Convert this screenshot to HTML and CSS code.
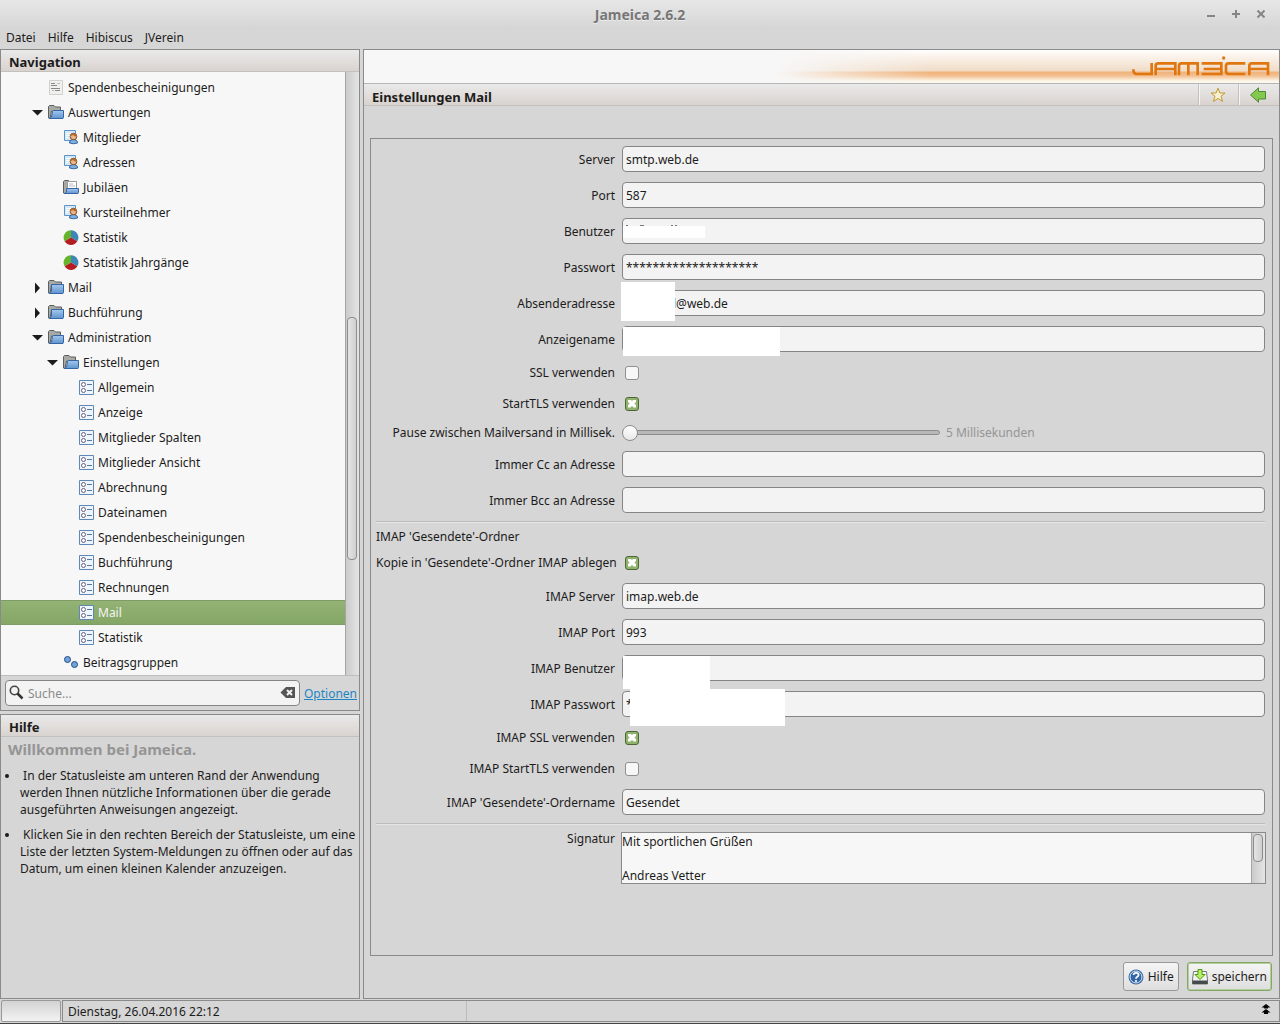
FILE: index.html
```html
<!DOCTYPE html>
<html lang="de">
  <head>
    <meta charset="UTF-8" />
    <meta name="viewport" content="width=device-width, initial-scale=1.0" />
    <title>Jameica 2.6.2</title>
    <link rel="stylesheet" href="styles.css">
  </head>
  <body>
    <svg class="icon-defs" aria-hidden="true">
      <defs>
        <linearGradient id="blue" x1="0" y1="0" x2="0" y2="1">
          <stop offset="0" stop-color="#a5c8ec" />
          <stop offset="1" stop-color="#5f93cf" />
        </linearGradient>
      </defs>
      <symbol id="folder" viewBox="0 0 16 16">
        <path d="M.5 13V1.500L1.500 .5H6L7.500 2H13.500V5H3.500L2 13.500H1z" fill="#a9a9a5" stroke="#5c5f60" />
        <path d="M3.500 4.500H15.500V12.500L15 13.500H1.500L3.500 11z" fill="url(#blue)" stroke="#3465a4" />
      </symbol>
      <symbol id="folder-open" viewBox="0 0 16 16">
        <path d="M.5 13V1.500L1.500 .5H6L7.500 2H12.500V6H3.500L2 13.500H1z" fill="#a9a9a5" stroke="#5c5f60" />
        <path d="M4.500 6.500L5.500 5.500H15.500V12.500L15 13.500H1.500L3.500 12z" fill="url(#blue)" stroke="#3465a4" />
      </symbol>
      <symbol id="folder-doc" viewBox="0 0 16 16">
        <path d="M.5 13V1.500L1.500 .5H5.500L7 2V13.500H1z" fill="#a9a9a5" stroke="#5c5f60" />
        <path d="M4.500 1.500H13.500V10H4.500z" fill="#fff" stroke="#999" />
        <path d="M6 4H10M6 6H12" stroke="#bbb" />
        <path d="M3.500 8.500H15.500V12.500L15 13.500H1.500L3.500 12z" fill="url(#blue)" stroke="#3465a4" />
      </symbol>
      <symbol id="doc" viewBox="0 0 16 16">
        <path d="M1.500 .5H14.500V14.500H1.500z" fill="#f0f0ee" stroke="#d0d0ce" />
        <path d="M3 3.500H7M3 5.500H9M3 8.500H12M7 10.500H12" stroke="#888" />
        <path d="M9 3.500H12M4 10.500H6" stroke="#bbb" />
      </symbol>
      <symbol id="person" viewBox="0 0 16 16">
        <path d="M1.500 .5H12.500V10.500H1.500z" fill="#d5e8f8" stroke="#5c93c9" />
        <path d="M3 3.500H8M3 5.500H6M3 7.500H5" stroke="#fff" />
        <path d="M6.500 13V12Q7 9.500 10.500 9.500T14.500 12V13Q10.500 14.500 6.500 13z" fill="#7fb0e2" stroke="#3465a4" />
        <circle cx="10.500" cy="6.500" r="3.300" fill="#e8b68a" stroke="#8a4e22" />
        <path d="M7 6Q8 2.500 11 3.500T14 6.500Q11 6.500 10 5Q9 6 7 6z" fill="#b36b2e" />
      </symbol>
      <symbol id="pie" viewBox="0 0 16 16">
        <path d="M8 7.500L1.700 11.300A7.300 7.300 0 0 1 8 .2z" fill="#65b52b" />
        <path d="M8 7.500V.2A7.300 7.300 0 0 1 14.300 11.300z" fill="#3d86b8" />
        <path d="M8 7.500L14.300 11.300A7.300 7.300 0 0 1 1.700 11.300z" fill="#b51c22" />
      </symbol>
      <symbol id="settings" viewBox="0 0 16 16">
        <path d="M1.500 .5H15.500V14.500H1.500z" fill="#eef5fc" stroke="#5f88b5" />
        <path d="M9 4.500H14M9 10.500H14" stroke="#5577a0" />
        <circle cx="5.500" cy="4.500" r="2" fill="#fff" stroke="#665f80" />
        <circle cx="5.500" cy="10.500" r="2" fill="#fff" stroke="#665f80" />
      </symbol>
      <symbol id="group" viewBox="0 0 16 16">
        <circle cx="4.500" cy="4.500" r="3" fill="#6fa3dc" stroke="#204a87" />
        <circle cx="11.500" cy="9.500" r="3" fill="#6fa3dc" stroke="#204a87" />
      </symbol>
      <symbol id="arrow-down" viewBox="0 0 12 12">
        <path d="M1 3H12L6.500 8.500z" fill="#1c1c1c" />
      </symbol>
      <symbol id="arrow-right" viewBox="0 0 12 12">
        <path d="M4 .5V11.500L9 6z" fill="#1c1c1c" />
      </symbol>
    </svg>

    <header class="titlebar">
      <h1>Jameica 2.6.2</h1>
      <div class="window-buttons">
        <button type="button" aria-label="Minimieren"><svg viewBox="0 0 9 9"><path d="M1 6H9" /></svg></button>
        <button type="button" aria-label="Maximieren"><svg viewBox="0 0 9 9"><path d="M5 0V8M1 4H9" /></svg></button>
        <button type="button" aria-label="Schließen"><svg viewBox="0 0 9 9"><path d="M1.500 .5L8.500 7.500M8.500 .5L1.500 7.500" /></svg></button>
      </div>
    </header>

    <nav class="menubar">
      <a href="#">Datei</a>
      <a href="#">Hilfe</a>
      <a href="#">Hibiscus</a>
      <a href="#">JVerein</a>
    </nav>

    <main class="workspace">
      <aside class="sidebar">
        <section class="pane">
          <h2 class="pane-title">Navigation</h2>
          <div class="tree-wrap">
            <ul class="tree">
              <li class="level-1"><span class="toggle"></span><svg class="icon"><use href="#doc" /></svg>Spendenbescheinigungen</li>
              <li class="level-1"><svg class="toggle"><use href="#arrow-down" /></svg><svg class="icon"><use href="#folder-open" /></svg>Auswertungen</li>
              <li class="level-2"><span class="toggle"></span><svg class="icon"><use href="#person" /></svg>Mitglieder</li>
              <li class="level-2"><span class="toggle"></span><svg class="icon"><use href="#person" /></svg>Adressen</li>
              <li class="level-2"><span class="toggle"></span><svg class="icon"><use href="#folder-doc" /></svg>Jubiläen</li>
              <li class="level-2"><span class="toggle"></span><svg class="icon"><use href="#person" /></svg>Kursteilnehmer</li>
              <li class="level-2"><span class="toggle"></span><svg class="icon"><use href="#pie" /></svg>Statistik</li>
              <li class="level-2"><span class="toggle"></span><svg class="icon"><use href="#pie" /></svg>Statistik Jahrgänge</li>
              <li class="level-1"><svg class="toggle"><use href="#arrow-right" /></svg><svg class="icon"><use href="#folder" /></svg>Mail</li>
              <li class="level-1"><svg class="toggle"><use href="#arrow-right" /></svg><svg class="icon"><use href="#folder" /></svg>Buchführung</li>
              <li class="level-1"><svg class="toggle"><use href="#arrow-down" /></svg><svg class="icon"><use href="#folder-open" /></svg>Administration</li>
              <li class="level-2"><svg class="toggle"><use href="#arrow-down" /></svg><svg class="icon"><use href="#folder-open" /></svg>Einstellungen</li>
              <li class="level-3"><span class="toggle"></span><svg class="icon"><use href="#settings" /></svg>Allgemein</li>
              <li class="level-3"><span class="toggle"></span><svg class="icon"><use href="#settings" /></svg>Anzeige</li>
              <li class="level-3"><span class="toggle"></span><svg class="icon"><use href="#settings" /></svg>Mitglieder Spalten</li>
              <li class="level-3"><span class="toggle"></span><svg class="icon"><use href="#settings" /></svg>Mitglieder Ansicht</li>
              <li class="level-3"><span class="toggle"></span><svg class="icon"><use href="#settings" /></svg>Abrechnung</li>
              <li class="level-3"><span class="toggle"></span><svg class="icon"><use href="#settings" /></svg>Dateinamen</li>
              <li class="level-3"><span class="toggle"></span><svg class="icon"><use href="#settings" /></svg>Spendenbescheinigungen</li>
              <li class="level-3"><span class="toggle"></span><svg class="icon"><use href="#settings" /></svg>Buchführung</li>
              <li class="level-3"><span class="toggle"></span><svg class="icon"><use href="#settings" /></svg>Rechnungen</li>
              <li class="level-3 selected"><span class="toggle"></span><svg class="icon"><use href="#settings" /></svg>Mail</li>
              <li class="level-3"><span class="toggle"></span><svg class="icon"><use href="#settings" /></svg>Statistik</li>
              <li class="level-2"><span class="toggle"></span><svg class="icon"><use href="#group" /></svg>Beitragsgruppen</li>
            </ul>
            <div class="scrollbar tree-scrollbar"><div class="thumb"></div></div>
          </div>
          <div class="search-bar">
            <div class="search-box">
              <svg class="icon" viewBox="0 0 16 16"><circle cx="5.500" cy="5.500" r="4.200" fill="none" stroke="#444" stroke-width="1.600" /><path d="M8.500 8.500L13.500 13.500" stroke="#333" stroke-width="2.500" /></svg>
              <input type="text" placeholder="Suche..." aria-label="Suche" />
              <svg class="icon" viewBox="0 0 16 16"><path d="M.5 7.500L6 2H15V13H6z" fill="#555" /><path d="M7 5L12 10M12 5L7 10" stroke="#f3f3f3" stroke-width="2" /></svg>
            </div>
            <a href="#">Optionen</a>
          </div>
        </section>

        <section class="pane help-pane">
          <h2 class="pane-title">Hilfe</h2>
          <h3>Willkommen bei Jameica.</h3>
          <ul class="help-list">
            <li>&nbsp;In der Statusleiste am unteren Rand der Anwendung werden Ihnen nützliche Informationen über die gerade ausgeführten Anweisungen angezeigt.</li>
            <li>&nbsp;Klicken Sie in den rechten Bereich der Statusleiste, um eine Liste der letzten System-Meldungen zu öffnen oder auf das Datum, um einen kleinen Kalender anzuzeigen.</li>
          </ul>
        </section>
      </aside>

      <section class="pane content">
        <div class="banner">
          <svg class="logo" viewBox="0 0 414 60" role="img" aria-label="Jameica">
            <path d="M4 40Q4 54 14 54H59V21M71 58V29Q71 22 79 22H130V58M71 39H130M141 58V29Q141 22 149 22H197V58M169 22V58M209 22H268V54H209M215 39H268M340 22H290Q282 22 282 30V46Q282 54 290 54H340M352 58V29Q352 22 360 22H408V58M352 39H408" />
            <circle cx="275" cy="6" r="5" />
          </svg>
        </div>
        <div class="content-title">
          <h2>Einstellungen Mail</h2>
          <button type="button" aria-label="Lesezeichen">
            <svg viewBox="0 0 16 16"><path d="M8 1.200L9.900 6H15L11 9.200L12.500 14.500L8 11.400L3.500 14.500L5 9.200L1 6H6.100z" fill="#f7f0d2" stroke="#c09a2f" /></svg>
          </button>
          <button type="button" aria-label="Zurück">
            <svg viewBox="0 0 16 16"><path d="M.5 8L8.500 .8V4.500H15.500V12H8.500V15.200z" fill="#83c94f" stroke="#4b8a35" /></svg>
          </button>
        </div>

        <form class="settings">
          <div class="panel">
            <div class="row">
              <label for="server">Server</label>
              <div class="field"><input type="text" id="server" value="smtp.web.de" /></div>
            </div>
            <div class="row">
              <label for="port">Port</label>
              <div class="field"><input type="text" id="port" value="587" /></div>
            </div>
            <div class="row">
              <label for="user">Benutzer</label>
              <div class="field">
                <input type="text" id="user" />
                <svg class="cover cover-user" viewBox="0 0 82 13"><path d="M0 1H82V13H0z" fill="#fff" /><path d="M3 .5H5M17 .5H21M48 .5H50M52 .5H54" stroke="#777" /></svg>
              </div>
            </div>
            <div class="row">
              <label for="password">Passwort</label>
              <div class="field"><input type="text" id="password" value="********************" /></div>
            </div>
            <div class="row">
              <label for="sender">Absenderadresse</label>
              <div class="field">
                <input type="text" id="sender" class="indented" value="l@web.de" />
                <span class="cover cover-sender"></span>
              </div>
            </div>
            <div class="row">
              <label for="display-name">Anzeigename</label>
              <div class="field">
                <input type="text" id="display-name" />
                <span class="cover cover-name"></span>
              </div>
            </div>
            <div class="row check-row">
              <label for="ssl">SSL verwenden</label>
              <div class="field"><input type="checkbox" id="ssl" /></div>
            </div>
            <div class="row check-row">
              <label for="starttls">StartTLS verwenden</label>
              <div class="field"><input type="checkbox" id="starttls" checked /></div>
            </div>
            <div class="row slider-row">
              <label for="pause">Pause zwischen Mailversand in Millisek.</label>
              <div class="field">
                <input type="range" id="pause" min="5" max="1000" value="5" />
                <output for="pause">5 Millisekunden</output>
              </div>
            </div>
            <div class="row">
              <label for="cc">Immer Cc an Adresse</label>
              <div class="field"><input type="text" id="cc" /></div>
            </div>
            <div class="row">
              <label for="bcc">Immer Bcc an Adresse</label>
              <div class="field"><input type="text" id="bcc" /></div>
            </div>
            <hr />
            <h3>IMAP 'Gesendete'-Ordner</h3>
            <div class="row check-row">
              <label for="imap-copy">Kopie in 'Gesendete'-Ordner IMAP ablegen</label>
              <div class="field"><input type="checkbox" id="imap-copy" checked /></div>
            </div>
            <div class="row">
              <label for="imap-server">IMAP Server</label>
              <div class="field"><input type="text" id="imap-server" value="imap.web.de" /></div>
            </div>
            <div class="row">
              <label for="imap-port">IMAP Port</label>
              <div class="field"><input type="text" id="imap-port" value="993" /></div>
            </div>
            <div class="row">
              <label for="imap-user">IMAP Benutzer</label>
              <div class="field">
                <input type="text" id="imap-user" />
                <span class="cover cover-imap-user"></span>
              </div>
            </div>
            <div class="row">
              <label for="imap-password">IMAP Passwort</label>
              <div class="field">
                <input type="text" id="imap-password" value="*" />
                <span class="cover cover-imap-password"></span>
              </div>
            </div>
            <div class="row check-row">
              <label for="imap-ssl">IMAP SSL verwenden</label>
              <div class="field"><input type="checkbox" id="imap-ssl" checked /></div>
            </div>
            <div class="row check-row">
              <label for="imap-starttls">IMAP StartTLS verwenden</label>
              <div class="field"><input type="checkbox" id="imap-starttls" /></div>
            </div>
            <div class="row">
              <label for="imap-folder">IMAP 'Gesendete'-Ordername</label>
              <div class="field"><input type="text" id="imap-folder" value="Gesendet" /></div>
            </div>
            <hr />
            <div class="row signature-row">
              <label for="signature">Signatur</label>
              <div class="signature">
                <textarea id="signature" rows="3">Mit sportlichen Grüßen

Andreas Vetter</textarea>
                <div class="scrollbar"><div class="thumb"></div></div>
              </div>
            </div>
          </div>

          <div class="actions">
            <button type="button">
              <svg viewBox="0 0 16 16"><circle cx="8" cy="8" r="7.500" fill="#3465a4" /><circle cx="8" cy="8" r="6" fill="#3465a4" stroke="#dce8f5" /><path d="M5.500 6Q5.800 3.800 8.200 3.800T10.600 6Q10.600 7.200 9 8Q8 8.500 8 9.800" fill="none" stroke="#fff" stroke-width="1.800" /><circle cx="8" cy="12" r="1.100" fill="#fff" /></svg>
              Hilfe
            </button>
            <button type="submit" class="primary">
              <svg viewBox="0 0 16 16"><path d="M1.500 2.500H14.500L15.500 11V15H.5V11z" fill="#f3f3f3" stroke="#777" /><path d="M.5 11.500H15.500V15H.5z" fill="#444b4d" /><path d="M6 .5H10V5.500H13L8 10.500L3 5.500H6z" fill="#b7f06a" stroke="#4e9a06" /></svg>
              speichern
            </button>
          </div>
        </form>
      </section>
    </main>

    <footer class="statusbar">
      <div class="progress"></div>
      <div class="status">
        <span class="date">Dienstag, 26.04.2016 22:12</span>
        <button type="button" aria-label="System-Meldungen">
          <svg viewBox="0 0 10 10"><path d="M5 0L9.500 3.500H7V4.500H3V3.500H.5zM5 5L9.500 8.500H7V10H3V8.500H.5z" /></svg>
        </button>
      </div>
    </footer>
  </body>
</html>
```
FILE: styles.css
```css
* {
  box-sizing: border-box;
}
body {
  margin: 0;
  min-height: 100vh;
  display: flex;
  flex-direction: column;
  background: #d6d6d6;
  color: #1c1c1c;
  font-family: "Noto Sans", sans-serif;
  font-size: 12px;
  line-height: 17px;
}
h1,
h2,
h3,
ul {
  margin: 0;
  padding: 0;
}
button,
input,
textarea {
  font: inherit;
  color: inherit;
}
.icon-defs {
  position: absolute;
  width: 0;
  height: 0;
}
.icon {
  width: 16px;
  height: 16px;
  flex: none;
}

/* window frame */
.titlebar {
  height: 28px;
  display: grid;
  grid-template-columns: 1fr auto 1fr;
  align-items: center;
  background: linear-gradient(#e7e7e7, #d6d6d6);
}
.titlebar h1 {
  grid-column: 2;
  font-size: 14px;
  color: #777;
  text-shadow: 0 1px #eee;
}
.window-buttons {
  display: flex;
  justify-content: flex-end;
  gap: 16px;
  padding-right: 15px;
}
.window-buttons button {
  width: 9px;
  height: 9px;
  padding: 0;
  border: none;
  background: none;
  display: flex;
}
.window-buttons svg {
  width: 9px;
  height: 9px;
  fill: none;
  stroke: #858585;
  stroke-width: 2;
}
.menubar {
  height: 21px;
  display: flex;
  gap: 12px;
  padding: 1px 6px;
}
.menubar a {
  color: inherit;
  text-decoration: none;
}

.workspace {
  flex: 1;
  display: grid;
  grid-template-columns: 360px 1fr;
  gap: 3px;
}
.sidebar {
  display: flex;
  flex-direction: column;
  gap: 3px;
}
.pane {
  border: 1px solid #8a8a8a;
}
.pane-title {
  height: 22px;
  padding: 4px 8px 0;
  font-size: 13px;
  line-height: 17px;
  background: linear-gradient(#eaeaea, #d9d3cf);
  border-bottom: 1px solid #c4c0bd;
}

/* navigation tree */
.tree-wrap {
  display: flex;
  background: #f7f7f7;
}
.tree {
  flex: 1;
  list-style: none;
  padding-top: 3px;
}
.tree li {
  height: 25px;
  display: flex;
  align-items: center;
}
.tree .toggle {
  width: 12px;
  height: 12px;
  margin-right: 5px;
}
.tree .icon {
  margin-right: 4px;
}
.level-1 {
  padding-left: 30px;
}
.level-2 {
  padding-left: 45px;
}
.level-3 {
  padding-left: 60px;
}
.tree .selected {
  color: #f5f5f5;
  background: linear-gradient(#93b374, #84a666);
  border-top: 1px solid #7f9b66;
  border-bottom: 1px solid #7f9b66;
}
.scrollbar {
  width: 14px;
  padding: 1px;
  border-left: 1px solid #a5a5a5;
  background: linear-gradient(to right, #cbcbcb, #e4e4e4);
}
.thumb {
  width: 10px;
  border: 1px solid #8c8c8c;
  border-radius: 4px;
  background: linear-gradient(to right, #e4e4e4, #cfcfcf);
}
.tree-scrollbar {
  display: grid;
  grid-template-rows: 244fr 244fr 114fr;
}
.tree-scrollbar .thumb {
  grid-row: 2;
}

.search-bar {
  height: 35px;
  display: flex;
  align-items: center;
  gap: 4px;
  padding: 0 2px 0 4px;
  border-top: 1px solid #bdbdbd;
}
.search-box {
  flex: 1;
  height: 26px;
  display: flex;
  align-items: center;
  gap: 3px;
  padding: 0 3px;
  border: 1px solid #858585;
  border-radius: 4px;
  background: #f3f3f3;
}
.search-box input {
  flex: 1;
  min-width: 0;
  padding: 0;
  border: none;
  background: none;
}
.search-box input::placeholder {
  color: #8a8a8a;
}
.search-bar a {
  color: #1e85c4;
}

.help-pane {
  flex: 1;
}
.help-pane h3 {
  padding: 2px 7px 8px;
  font-size: 15px;
  line-height: 20px;
  color: #959595;
}
.help-list {
  padding-left: 19px;
}
.help-list li {
  margin-bottom: 8px;
}

/* content */
.content {
  display: flex;
  flex-direction: column;
}
.banner {
  height: 34px;
  display: flex;
  justify-content: flex-end;
  padding: 6px 9px;
  border-bottom: 1px solid #b5b5b5;
  background:
    linear-gradient(to right, #f7f7f7 45%, transparent 62%),
    linear-gradient(#ffffff, #fbf3ec 6px, #f0dcc6 21px, #f0b27a 22px, #f3c193 26px, #fbf7ea 31px);
}
.logo {
  width: 138px;
  height: 20px;
}
.logo path {
  fill: none;
  stroke: #df760f;
  stroke-width: 8;
}
.logo circle {
  fill: #df760f;
}
.content-title {
  height: 22px;
  display: flex;
  background: linear-gradient(#eaeaea, #d9d3cf);
  border-bottom: 1px solid #c4c0bd;
}
.content-title h2 {
  flex: 1;
  padding: 5px 8px 0;
  font-size: 13px;
  line-height: 17px;
}
.content-title button {
  width: 40px;
  padding: 0 3px 0 0;
  border: none;
  border-left: 1px solid #f5f5f5;
  box-shadow: -1px 0 #c4c0bd;
  background: none;
  display: flex;
  align-items: center;
  justify-content: center;
}
.content-title svg {
  width: 16px;
  height: 16px;
}
.settings {
  flex: 1;
  display: flex;
  flex-direction: column;
  padding: 32px 6px 7px;
}
.panel {
  flex: 1;
  padding: 2px 7px 3px 5px;
  border: 1px solid #8a8a8a;
}
.row {
  height: 36px;
  display: grid;
  grid-template-columns: 239px 1fr;
  gap: 7px;
  align-items: center;
}
.row label {
  text-align: right;
  white-space: nowrap;
}
.field {
  position: relative;
  display: flex;
  align-items: center;
}
.field input[type="text"] {
  width: 100%;
  height: 26px;
  padding: 0 3px;
  border: 1px solid #858585;
  border-radius: 4px;
  background: #f3f3f3;
}
.field input.indented[type="text"] {
  padding-left: 50px;
}
.check-row {
  height: 31px;
}
.slider-row {
  height: 27px;
}
.signature-row {
  height: auto;
  padding-top: 3px;
  align-items: start;
}
.panel hr {
  height: 2px;
  margin: 3px 0 2px;
  border: none;
  border-top: 1px solid #bcbcbc;
  border-bottom: 1px solid #e6e6e6;
}
.panel h3 {
  height: 22px;
  font-size: 12px;
  line-height: 24px;
  font-weight: 400;
}

input[type="checkbox"] {
  appearance: none;
  width: 14px;
  height: 14px;
  margin: 0 3px;
  border: 1px solid #8f8f8f;
  border-radius: 3px;
  background: #f7f7f7;
}
input[type="checkbox"]:checked {
  display: grid;
  place-items: center;
  border-color: #4d6638;
  background: #8fb36c;
}
input[type="checkbox"]:checked::before {
  content: "";
  width: 8px;
  height: 8px;
  background: #fff;
  clip-path: polygon(0 0, 30% 0, 50% 20%, 70% 0, 100% 0, 100% 30%, 80% 50%, 100% 70%, 100% 100%, 70% 100%, 50% 80%, 30% 100%, 0 100%, 0 70%, 20% 50%, 0 30%);
}

input[type="range"] {
  appearance: none;
  width: 318px;
  height: 16px;
  margin: 0 6px 0 0;
  background: none;
}
input[type="range"]::-webkit-slider-runnable-track {
  height: 5px;
  border: 1px solid #8c8c8c;
  border-radius: 3px;
  background: #b8b8b8;
}
input[type="range"]::-webkit-slider-thumb {
  appearance: none;
  width: 16px;
  height: 16px;
  margin-top: -6px;
  margin-left: -1px;
  border: 1px solid #8c8c8c;
  border-radius: 50%;
  background: linear-gradient(#fff, #e8e8e8);
}
output {
  color: #959595;
}

/* blanked out personal data */
.cover {
  position: absolute;
  z-index: 1;
  background: #fff;
}
.cover-user {
  top: 7px;
  left: 1px;
  width: 82px;
  height: 13px;
  background: none;
}
.cover-sender {
  top: -8px;
  left: -1px;
  width: 54px;
  height: 39px;
}
.cover-name {
  top: 1px;
  left: 1px;
  width: 157px;
  height: 29px;
}
.cover-imap-user {
  top: 1px;
  left: 1px;
  width: 87px;
  height: 33px;
}
.cover-imap-password {
  top: -2px;
  left: 8px;
  width: 155px;
  height: 37px;
}

.signature {
  display: flex;
  height: 52px;
  margin: 2px -1px 0;
  border: 1px solid #8a8a8a;
  background: #f7f7f7;
}
.signature textarea {
  flex: 1;
  height: 50px;
  padding: 0;
  border: none;
  background: none;
  resize: none;
  overflow: hidden;
}
.signature .thumb {
  height: 28px;
}

.actions {
  display: flex;
  justify-content: flex-end;
  gap: 8px;
  padding-top: 6px;
  margin-right: 1px;
}
.actions button {
  height: 29px;
  display: flex;
  align-items: center;
  gap: 4px;
  padding: 0 4px;
  border: 1px solid #999;
  border-radius: 3px;
  background: linear-gradient(#f5f5f5, #dedede);
}
.actions svg {
  width: 16px;
  height: 16px;
}
.actions .primary {
  border-color: #84a666;
  box-shadow: inset 0 0 0 1px #b5cf9c;
}

/* status bar */
.statusbar {
  height: 25px;
  display: flex;
  gap: 1px;
  padding: 1px 0 1px 1px;
  border-bottom: 1px solid #444;
}
.progress {
  width: 60px;
  border: 1px solid #999;
  border-radius: 2px;
  background: linear-gradient(#d2d2d2, #f3f3f3);
}
.status {
  flex: 1;
  display: flex;
  justify-content: space-between;
  border: 1px solid #8a8a8a;
}
.date {
  width: 404px;
  padding: 2px 5px;
  border-right: 1px solid #bcbcbc;
}
.status button {
  display: flex;
  padding: 3px 8px;
  border: none;
  background: none;
}
.status svg {
  width: 10px;
  height: 10px;
}
```
